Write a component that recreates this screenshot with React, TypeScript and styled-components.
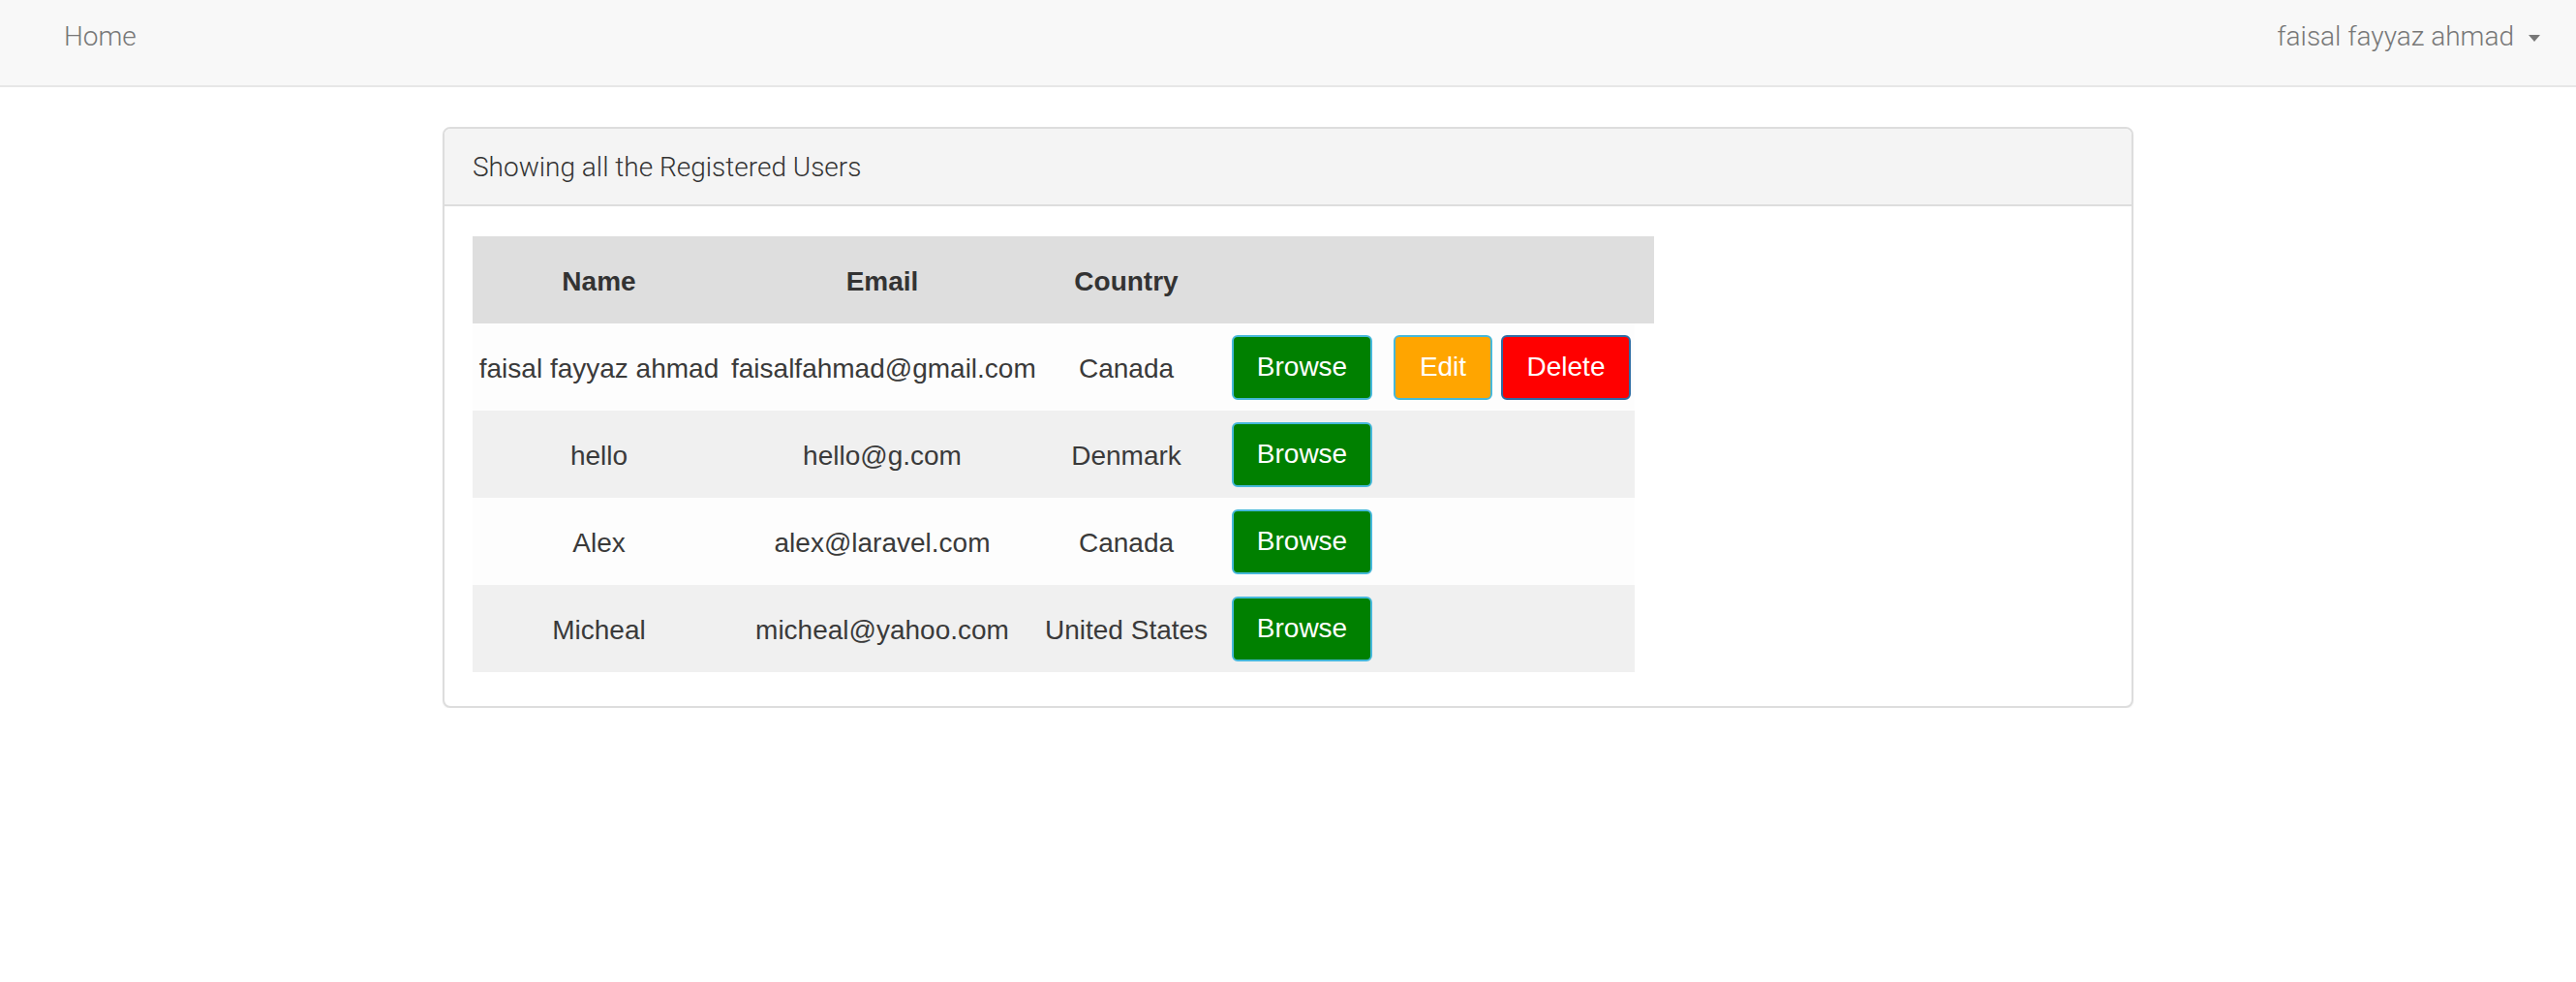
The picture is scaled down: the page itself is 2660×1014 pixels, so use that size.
import React from 'react';
import styled, { createGlobalStyle } from 'styled-components';

const GlobalStyle = createGlobalStyle`
  html, body {
    margin: 0;
    padding: 0;
    background: #fff;
  }
  body {
    font-family: Roboto, "Liberation Sans", Arial, sans-serif;
  }
`;

const Navbar = styled.nav`
  box-sizing: border-box;
  height: 90px;
  background: #f8f8f8;
  border-bottom: 2px solid #e7e7e7;
  display: flex;
  align-items: flex-start;
  justify-content: space-between;
  padding: 21px 37px 0 66px;
  font-family: Roboto, "Liberation Sans", sans-serif;
  font-weight: 300;
  font-size: 28px;
  line-height: 33px;
  color: #777;
`;

const NavLink = styled.a`
  color: inherit;
  text-decoration: none;
  display: flex;
  align-items: center;
`;

const Caret = styled.span`
  display: inline-block;
  width: 0;
  height: 0;
  margin-left: 15px;
  margin-top: 3px;
  border-top: 7px solid #777;
  border-left: 6.5px solid transparent;
  border-right: 6.5px solid transparent;
`;

const Main = styled.main`
  padding-top: 41px;
`;

const Panel = styled.section`
  width: 1746px;
  box-sizing: border-box;
  margin: 0 auto;
  border: 2px solid #ddd;
  border-radius: 8px;
  background: #fff;
  box-shadow: 0 1px 2px rgba(0, 0, 0, 0.05);
`;

const PanelHeading = styled.header`
  height: 78px;
  display: flex;
  align-items: center;
  padding: 0 29px;
  background: #f4f4f4;
  border-bottom: 2px solid #ddd;
  border-radius: 6px 6px 0 0;
  font-family: Roboto, "Liberation Sans", sans-serif;
  font-weight: 300;
  font-size: 28px;
  color: #333;
`;

const PanelBody = styled.div`
  padding: 31px 29px 35px;
`;

const Table = styled.table`
  border-collapse: collapse;
  table-layout: fixed;
  width: 1220px;
  font-family: "Liberation Sans", Arial, sans-serif;
  font-size: 28px;
  color: #333;
`;

const HeadRow = styled.tr`
  background: #dedede;
`;

const Th = styled.th`
  height: 90px;
  box-sizing: border-box;
  padding: 3px 0 0;
  text-align: center;
  font-weight: bold;
`;

const Row = styled.tr<{ $shade: boolean }>`
  background: ${(p) => (p.$shade ? '#f0f0f0' : '#fdfdfd')};
`;

const Td = styled.td`
  height: 90px;
  box-sizing: border-box;
  padding: 3px 6px 0;
  text-align: center;
  vertical-align: middle;
  white-space: nowrap;
  color: #3a3a3a;
`;

const ActionCell = styled.td<{ $shift?: number }>`
  height: 90px;
  padding: 0 0 0 ${(p) => p.$shift ?? 0}px;
  text-align: center;
  vertical-align: middle;
`;

const ActionButton = styled.button<{ $bg: string; $edge: string; $w: number }>`
  width: ${(p) => p.$w}px;
  height: 67px;
  padding: 0;
  border: 2px solid ${(p) => p.$edge};
  border-radius: 6px;
  background: ${(p) => p.$bg};
  color: #fff;
  font-family: "Liberation Sans", Arial, sans-serif;
  font-size: 28px;
  cursor: pointer;
  vertical-align: middle;
`;

const users = [
  { name: 'faisal fayyaz ahmad', email: 'faisalfahmad@gmail.com', country: 'Canada', owner: true },
  { name: 'hello', email: 'hello@g.com', country: 'Denmark', owner: false },
  { name: 'Alex', email: 'alex@laravel.com', country: 'Canada', owner: false },
  { name: 'Micheal', email: 'micheal@yahoo.com', country: 'United States', owner: false },
];

const colWidths = [261, 324, 180, 183, 108, 144, 20];

const App: React.FC = () => {
  return (
    <>
      <GlobalStyle />
      <Navbar>
        <NavLink href="#">Home</NavLink>
        <NavLink href="#">
          faisal fayyaz ahmad
          <Caret />
        </NavLink>
      </Navbar>

      <Main>
        <Panel>
          <PanelHeading>Showing all the Registered Users</PanelHeading>
          <PanelBody>
            <Table>
              <colgroup>
                {colWidths.map((w, i) => (
                  <col key={i} style={{ width: w }} />
                ))}
              </colgroup>
              <thead>
                <HeadRow>
                  <Th>Name</Th>
                  <Th>Email</Th>
                  <Th>Country</Th>
                  <Th />
                  <Th />
                  <Th />
                  <Th />
                </HeadRow>
              </thead>
              <tbody>
                {users.map((u, i) => (
                  <Row key={u.email} $shade={i % 2 === 1}>
                    <Td>{u.name}</Td>
                    <Td>{u.email}</Td>
                    <Td>{u.country}</Td>
                    <ActionCell>
                      <ActionButton $bg="#008000" $edge="#46b8da" $w={145}>Browse</ActionButton>
                    </ActionCell>
                    <ActionCell>
                      {u.owner && <ActionButton $bg="#ffa500" $edge="#46b8da" $w={102}>Edit</ActionButton>}
                    </ActionCell>
                    <ActionCell $shift={2}>
                      {u.owner && <ActionButton $bg="#ff0000" $edge="#2e6da4" $w={134}>Delete</ActionButton>}
                    </ActionCell>
                  </Row>
                ))}
              </tbody>
            </Table>
          </PanelBody>
        </Panel>
      </Main>
    </>
  );
};

export default App;
